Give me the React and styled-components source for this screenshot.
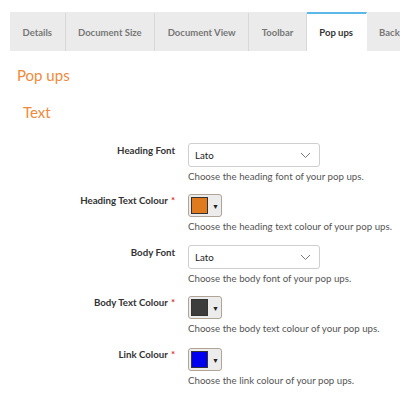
import React from "react";
import styled, { createGlobalStyle } from "styled-components";

const Global = createGlobalStyle`
  body {
    margin: 0;
    background: #fff;
    font-family: Lato, "Open Sans", sans-serif;
    color: #333;
  }
`;

const Page = styled.div`
  width: 400px;
  height: 397px;
  overflow: hidden;
  padding-top: 12px;
  box-sizing: border-box;
`;

const Tabs = styled.div`
  display: flex;
  margin-left: 10px;
  white-space: nowrap;
`;

const Tab = styled.div`
  flex: none;
  height: 39px;
  box-sizing: border-box;
  display: flex;
  align-items: center;
  padding: 0 12.5px;
  font-size: 9.5px;
  font-weight: 700;
  color: ${(p) => (p.$active ? "#333" : "#777")};
  background: ${(p) => (p.$active ? "#fff" : "#ebebeb")};
  border-top: 2px solid ${(p) => (p.$active ? "#5bb8e8" : "#ebebeb")};
  border-right: 1px solid ${(p) => (p.$active ? "#fff" : "#d8d8d8")};
`;

const PageTitle = styled.h1`
  margin: 15px 0 0 17px;
  font-size: 15px;
  font-weight: 400;
  color: #ef8a3c;
  line-height: 18px;
`;

const Section = styled.h2`
  margin: 19px 0 0 23px;
  font-size: 15px;
  font-weight: 400;
  color: #ef8a3c;
  line-height: 18px;
`;

const Form = styled.div`
  margin-top: 22px;
`;

const Row = styled.div`
  display: grid;
  grid-template-columns: 175px 1fr;
  column-gap: 13px;
  margin-bottom: ${(p) => (p.$colour ? "13px" : "11px")};
`;

const Label = styled.div`
  text-align: right;
  font-size: 9.7px;
  font-weight: 700;
  color: #333;
  padding-top: 1px;
  line-height: 12px;
`;

const Req = styled.span`
  color: #d9312b;
  margin-left: 3px;
`;

const Field = styled.div`
  display: flex;
  flex-direction: column;
  align-items: flex-start;
`;

const Select = styled.div`
  width: 132px;
  height: 24px;
  box-sizing: border-box;
  border: 1px solid #cfcfcf;
  border-radius: 3px;
  display: flex;
  align-items: center;
  justify-content: space-between;
  padding: 0 8px 0 6px;
  font-size: 9.7px;
  color: #222;
  background: #fff;
`;

const ColourButton = styled.div`
  width: 34px;
  height: 23px;
  margin-top: 1px;
  box-sizing: border-box;
  border: 1px solid #b0a496;
  border-radius: 3px;
  background: #ececec;
  display: flex;
  align-items: center;
  padding-left: 2px;
  gap: 4px;
`;

const Swatch = styled.div`
  width: 17px;
  height: 17px;
  box-sizing: border-box;
  border: 1px solid #333;
  background: ${(p) => p.$color};
`;

const Arrow = styled.span`
  font-size: 7px;
  color: #222;
`;

const Help = styled.div`
  margin-top: 3px;
  font-size: 9.7px;
  line-height: 12px;
  color: #555;
`;

const Chevron = () => (
  <svg width="11" height="7" viewBox="0 0 11 7" fill="none">
    <path d="M1 1l4.5 4.5L10 1" stroke="#777" strokeWidth="1" />
  </svg>
);

const tabs = ["Details", "Document Size", "Document View", "Toolbar", "Pop ups", "Background"];

const FontRow = ({ label, help }) => (
  <Row>
    <Label>{label}</Label>
    <Field>
      <Select>
        Lato
        <Chevron />
      </Select>
      <Help>{help}</Help>
    </Field>
  </Row>
);

const ColourRow = ({ label, color, help }) => (
  <Row $colour>
    <Label>
      {label}
      <Req>*</Req>
    </Label>
    <Field>
      <ColourButton>
        <Swatch $color={color} />
        <Arrow>▼</Arrow>
      </ColourButton>
      <Help>{help}</Help>
    </Field>
  </Row>
);

export default function App() {
  return (
    <Page>
      <Global />
      <Tabs>
        {tabs.map((t) => (
          <Tab key={t} $active={t === "Pop ups"}>
            {t}
          </Tab>
        ))}
      </Tabs>
      <PageTitle>Pop ups</PageTitle>
      <Section>Text</Section>
      <Form>
        <FontRow label="Heading Font" help="Choose the heading font of your pop ups." />
        <ColourRow
          label="Heading Text Colour"
          color="#e07a1e"
          help="Choose the heading text colour of your pop ups."
        />
        <FontRow label="Body Font" help="Choose the body font of your pop ups." />
        <ColourRow
          label="Body Text Colour"
          color="#3c3c3c"
          help="Choose the body text colour of your pop ups."
        />
        <ColourRow
          label="Link Colour"
          color="#0000ee"
          help="Choose the link colour of your pop ups."
        />
      </Form>
    </Page>
  );
}
